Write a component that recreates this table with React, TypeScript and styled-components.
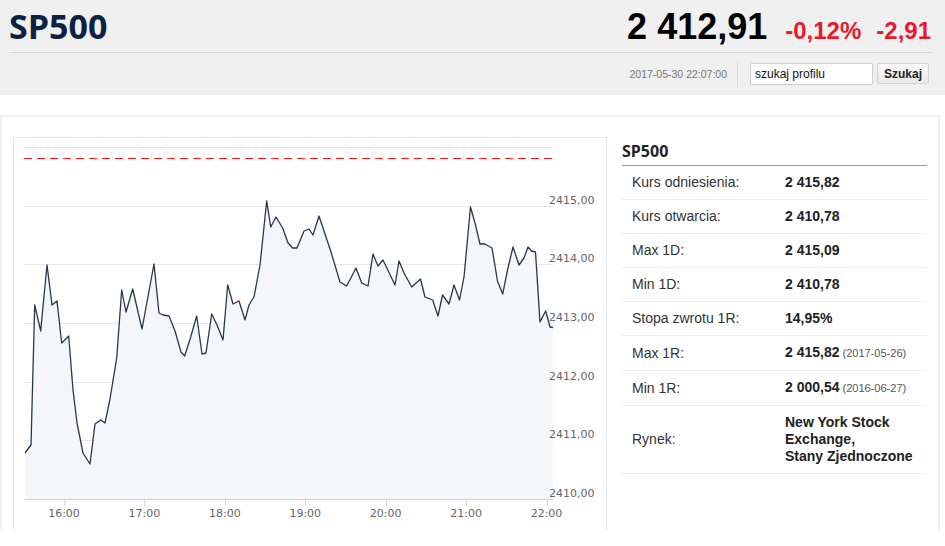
import { FC } from 'react';
import styled, { createGlobalStyle } from 'styled-components';

// chart drawn in page pixel space (viewBox offset = panel inner origin)
const VIEW = { x: 14, y: 138, w: 592, h: 392 };
const PLOT = { left: 24, right: 553, top: 147, bottom: 499 };
const PX_PER_POINT = 58.667;
const PX_PER_HOUR = 80.42;

const yOf = (p: number) => PLOT.bottom - (p - 2410) * PX_PER_POINT;
const xOf = (h: number) => 64 + (h - 16) * PX_PER_HOUR;
const fmt = (n: number) => n.toFixed(2).replace('.', ',');

const series: [number, number][] = [
  [25, 453], [31, 445], [34.7, 305], [40.7, 331], [47, 265], [52, 305], [57, 301],
  [61.7, 343], [68.7, 336], [73, 390], [77, 423], [83, 453], [90, 464], [95, 424],
  [100.7, 420], [105, 423], [110, 399], [116.7, 358], [121.7, 290], [126, 312],
  [132.7, 289], [142, 329], [154, 264], [159, 313], [163, 315], [169, 316], [175, 331],
  [181, 352], [184.7, 356], [190.7, 337], [196.7, 316], [202, 354], [206, 353],
  [211.7, 314], [217, 325], [223, 340], [227.7, 285], [233, 304], [239, 301], [245, 320],
  [249, 305], [254, 297], [260, 265], [266.7, 201], [270.7, 227], [276, 217],
  [282.7, 228], [288, 243], [292.7, 248], [297, 248], [304, 231], [309, 229], [313, 235],
  [319, 216], [331, 252], [340, 282], [346.7, 286], [356, 268], [361.7, 283], [368, 286],
  [373, 254], [378, 266], [383, 260], [395, 285], [399, 261], [404, 273], [411.7, 287],
  [420.5, 279], [425, 297], [432.7, 300], [438, 316], [442.5, 295], [449, 304],
  [454, 285], [459.5, 300], [464, 277], [470.5, 207], [475, 223], [480, 244], [485, 244],
  [492, 248], [497.5, 281], [502.7, 294], [507.5, 270], [513, 247], [519, 265],
  [524, 258], [528, 247], [531.5, 251], [535.5, 252], [540, 322], [545.7, 311],
  [550, 327], [553, 327.5],
];

const stats = [
  { label: 'Kurs odniesienia:', value: '2 415,82' },
  { label: 'Kurs otwarcia:', value: '2 410,78' },
  { label: 'Max 1D:', value: '2 415,09' },
  { label: 'Min 1D:', value: '2 410,78' },
  { label: 'Stopa zwrotu 1R:', value: '14,95%' },
  { label: 'Max 1R:', value: '2 415,82', date: '2017-05-26' },
  { label: 'Min 1R:', value: '2 000,54', date: '2016-06-27' },
];

const GlobalStyle = createGlobalStyle`
  body {
    margin: 0;
    background: #fff;
    font-family: "Liberation Sans", Arial, sans-serif;
    color: #222;
  }
`;

const Chart: FC = () => {
  const line = series.map(([x, y], i) => `${i ? 'L' : 'M'}${x} ${y}`).join(' ');
  const first = series[0];
  const last = series[series.length - 1];
  const area = `${line} L${last[0]} ${PLOT.bottom} L${first[0]} ${PLOT.bottom} Z`;
  const levels = [2411, 2412, 2413, 2414, 2415, 2416];
  const hours = [16, 17, 18, 19, 20, 21, 22];

  return (
    <svg
      width={VIEW.w}
      height={VIEW.h}
      viewBox={`${VIEW.x} ${VIEW.y} ${VIEW.w} ${VIEW.h}`}
      style={{ display: 'block' }}
    >
      {levels.map((p) => (
        <line
          key={p}
          x1={PLOT.left}
          x2={PLOT.right}
          y1={Math.round(yOf(p)) + 0.5}
          y2={Math.round(yOf(p)) + 0.5}
          stroke="#e6e6e6"
        />
      ))}
      <path d={area} fill="#f5f6f9" />
      <path d={line} fill="none" stroke="#263752" strokeWidth={1.3} strokeLinejoin="round" />
      <line
        x1={PLOT.left}
        x2={PLOT.right}
        y1={Math.round(yOf(2415.82)) + 0.5}
        y2={Math.round(yOf(2415.82)) + 0.5}
        stroke="#ff1a1a"
        strokeWidth={1.2}
        strokeDasharray="8 5"
      />
      <line x1={PLOT.left} x2={PLOT.right} y1={PLOT.bottom + 0.5} y2={PLOT.bottom + 0.5} stroke="#ccd6eb" />
      {hours.map((h) => (
        <g key={h}>
          <line
            x1={Math.round(xOf(h)) + 0.5}
            x2={Math.round(xOf(h)) + 0.5}
            y1={PLOT.bottom}
            y2={PLOT.bottom + 7}
            stroke="#ccd6eb"
          />
          <AxisText x={xOf(h)} y={517} textAnchor="middle">
            {`${h}:00`}
          </AxisText>
        </g>
      ))}
      {[2410, ...levels.slice(0, 5)].map((p) => (
        <AxisText key={p} x={549} y={yOf(p) - 2}>
          {fmt(p)}
        </AxisText>
      ))}
    </svg>
  );
};

const App: FC = () => (
  <>
    <GlobalStyle />
    <Header>
      <TopRow>
        <Title>SP500</Title>
        <Quote>
          <Price>2 412,91</Price>
          <Change>-0,12%</Change>
          <Change>-2,91</Change>
        </Quote>
      </TopRow>
      <Toolbar>
        <Stamp>2017-05-30 22:07:00</Stamp>
        <Divider />
        <Search defaultValue="szukaj profilu" />
        <SearchButton>Szukaj</SearchButton>
      </Toolbar>
    </Header>
    <Card>
      <ChartPanel>
        <Chart />
      </ChartPanel>
      <Info>
        <InfoTitle>SP500</InfoTitle>
        {stats.map((s) => (
          <Row key={s.label}>
            <Label>{s.label}</Label>
            <Value>
              {s.value}
              {s.date && <ValueDate> ({s.date})</ValueDate>}
            </Value>
          </Row>
        ))}
        <Row>
          <Label>Rynek:</Label>
          <Value>
            New York Stock Exchange,
            <br />
            Stany Zjednoczone
          </Value>
        </Row>
      </Info>
    </Card>
  </>
);

export default App;

const Header = styled.header`
  background: #f0f0f0;
  padding: 0 14px 0 9px;
  height: 95px;
  box-sizing: border-box;
`;

const TopRow = styled.div`
  display: flex;
  align-items: baseline;
  justify-content: space-between;
  height: 53px;
  box-sizing: border-box;
  padding-top: 4px;
  border-bottom: 1px solid #d6d6d6;
`;

const Title = styled.h1`
  margin: 0;
  font-family: "Open Sans", sans-serif;
  font-weight: 700;
  font-size: 34px;
  line-height: 44px;
  color: #0d2142;
`;

const Quote = styled.div`
  display: flex;
  align-items: baseline;
  gap: 15px;
`;

const Price = styled.span`
  font-weight: 700;
  font-size: 36px;
  color: #000;
  margin-right: 3px;
`;

const Change = styled.span`
  font-weight: 700;
  font-size: 24px;
  color: #e8192c;
`;

const Toolbar = styled.div`
  display: flex;
  align-items: center;
  justify-content: flex-end;
  height: 41px;
  padding-right: 2px;
`;

const Stamp = styled.span`
  font-size: 10.5px;
  color: #777;
`;

const Divider = styled.span`
  width: 1px;
  height: 26px;
  background: #dcdcdc;
  margin: 0 12px 0 10px;
`;

const Search = styled.input`
  box-sizing: border-box;
  width: 123px;
  height: 22px;
  padding: 2px 4px;
  border: 1px solid #cfcfcf;
  border-radius: 2px;
  background: #fff;
  font-family: "Liberation Sans", Arial, sans-serif;
  font-size: 12px;
  color: #111;
`;

const SearchButton = styled.button`
  box-sizing: border-box;
  margin-left: 4px;
  width: 52px;
  height: 21px;
  padding: 0;
  border: 1px solid #d2d2d2;
  border-radius: 2px;
  background: linear-gradient(#fafafa, #e8e8e8);
  font-family: "Liberation Sans", Arial, sans-serif;
  font-weight: 700;
  font-size: 12px;
  color: #222;
`;

const Card = styled.section`
  margin-top: 20px;
  width: 940px;
  height: 415px;
  box-sizing: border-box;
  border: 2px solid #efefef;
  border-bottom: none;
  padding: 20px 11px 0;
  display: flex;
  gap: 15px;
`;

const ChartPanel = styled.div`
  width: 594px;
  height: 393px;
  box-sizing: border-box;
  border: 1px solid #e8e8e8;
  border-bottom: none;
  flex-shrink: 0;
`;

const AxisText = styled.text`
  font-family: "DejaVu Sans", Verdana, sans-serif;
  font-size: 11px;
  fill: #666;
`;

const Info = styled.div`
  width: 305px;
`;

const InfoTitle = styled.h2`
  margin: 0;
  height: 29px;
  box-sizing: border-box;
  padding-top: 3px;
  font-family: "Open Sans", sans-serif;
  font-weight: 700;
  font-size: 16px;
  line-height: 22px;
  color: #222;
  border-bottom: 1.5px solid #9a9a9a;
`;

const Row = styled.div`
  display: flex;
  align-items: center;
  padding: 8px 0;
  border-bottom: 1px solid #eeeeee;
  line-height: 17px;
  font-size: 14px;
`;

const Label = styled.div`
  width: 153px;
  padding-left: 10px;
  flex-shrink: 0;
  color: #333;
`;

const Value = styled.div`
  flex: 1;
  font-weight: 700;
  color: #222;
`;

const ValueDate = styled.span`
  font-weight: 400;
  font-size: 11px;
  color: #555;
`;
